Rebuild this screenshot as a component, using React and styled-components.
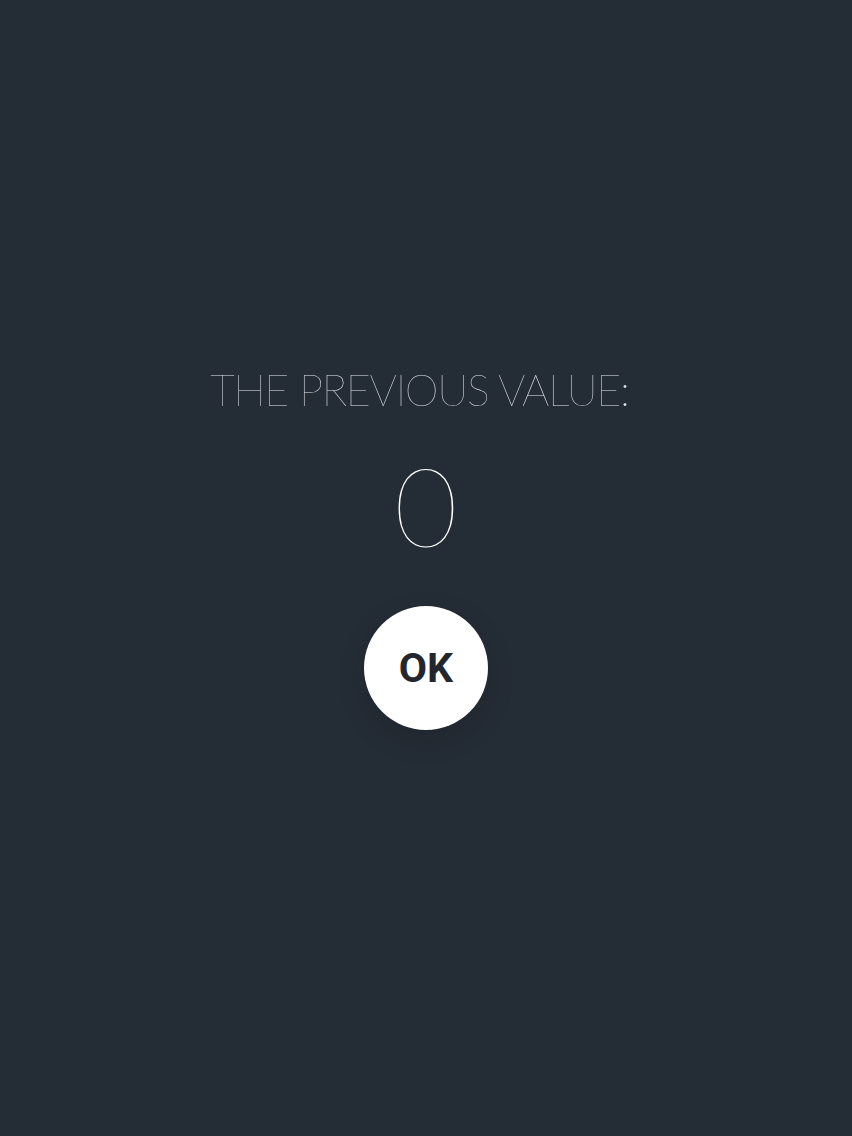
import React from "react";
import styled, { createGlobalStyle } from "styled-components";

const Global = createGlobalStyle`
  html, body { margin: 0; padding: 0; height: 100%; background: #242c35; }
  #root { height: 100%; }
`;

const Screen = styled.div`
  width: 852px;
  height: 1136px;
  background: #242c35;
  display: flex;
  flex-direction: column;
  align-items: center;
  padding-top: 367px;
  box-sizing: border-box;
`;

const Label = styled.div`
  font-family: Lato, "Open Sans", sans-serif;
  font-weight: 100;
  font-size: 43px;
  line-height: 46px;
  color: #e2e6ea;
  letter-spacing: -1.3px;
  padding-right: 13px;
  transform: translateZ(0);
`;

const Value = styled.div`
  margin-top: 36px;
  font-family: Lato, "Open Sans", sans-serif;
  font-weight: 100;
  font-size: 110px;
  line-height: 110px;
  color: #ffffff;
`;

const OkButton = styled.button`
  margin-top: 47px;
  width: 124px;
  height: 124px;
  border-radius: 50%;
  border: none;
  background: #ffffff;
  color: #23272d;
  font-family: Roboto, "Open Sans", sans-serif;
  font-weight: 700;
  font-size: 41px;
  display: flex;
  align-items: center;
  justify-content: center;
  padding: 0;
  box-shadow: 0 10px 30px rgba(0, 0, 0, 0.12);
`;

export default function App() {
  return (
    <>
      <Global />
      <Screen>
        <Label>THE PREVIOUS VALUE:</Label>
        <Value>0</Value>
        <OkButton>OK</OkButton>
      </Screen>
    </>
  );
}
